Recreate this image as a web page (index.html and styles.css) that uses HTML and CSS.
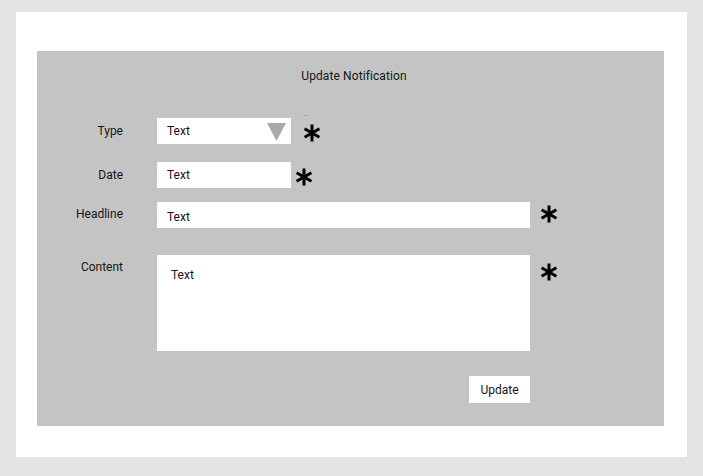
FILE: index.html
```html
<!DOCTYPE html>
<html lang="en">
<head>
<meta charset="utf-8">
<title>Update Notification</title>
<link rel="stylesheet" href="styles.css">
</head>
<body>
<div class="card">
  <section class="panel">
    <h1 class="title">Update Notification</h1>

    <div class="row row-type">
      <label class="label">Type</label>
      <div class="field">
        <div class="input input-short select">
          <span>Text</span>
          <svg class="caret" width="19" height="18" viewBox="0 0 19 18"><polygon points="0,0 19,0 9.5,18" fill="#a9a9a9"/></svg>
        </div>
        <span class="req req-type">
          <span class="note">...</span>
          <svg width="18" height="18" viewBox="0 0 18 18"><g stroke="#000" stroke-width="3"><line x1="9" y1="0.5" x2="9" y2="17.5"/><line x1="1.6" y1="4.75" x2="16.4" y2="13.25"/><line x1="16.4" y1="4.75" x2="1.6" y2="13.25"/></g></svg>
        </span>
      </div>
    </div>

    <div class="row row-date">
      <label class="label">Date</label>
      <div class="field">
        <div class="input input-short">Text</div>
        <span class="req req-date">
          <svg width="18" height="18" viewBox="0 0 18 18"><g stroke="#000" stroke-width="3"><line x1="9" y1="0.5" x2="9" y2="17.5"/><line x1="1.6" y1="4.75" x2="16.4" y2="13.25"/><line x1="16.4" y1="4.75" x2="1.6" y2="13.25"/></g></svg>
        </span>
      </div>
    </div>

    <div class="row row-headline">
      <label class="label">Headline</label>
      <div class="field">
        <div class="input input-long input-headline">Text</div>
        <span class="req req-headline">
          <svg width="18" height="18" viewBox="0 0 18 18"><g stroke="#000" stroke-width="3"><line x1="9" y1="0.5" x2="9" y2="17.5"/><line x1="1.6" y1="4.75" x2="16.4" y2="13.25"/><line x1="16.4" y1="4.75" x2="1.6" y2="13.25"/></g></svg>
        </span>
      </div>
    </div>

    <div class="row row-content">
      <label class="label">Content</label>
      <div class="field">
        <div class="input input-long textarea">Text</div>
        <span class="req req-content">
          <svg width="18" height="18" viewBox="0 0 18 18"><g stroke="#000" stroke-width="3"><line x1="9" y1="0.5" x2="9" y2="17.5"/><line x1="1.6" y1="4.75" x2="16.4" y2="13.25"/><line x1="16.4" y1="4.75" x2="1.6" y2="13.25"/></g></svg>
        </span>
      </div>
    </div>

    <div class="row row-actions">
      <span></span>
      <div class="actions">
        <button class="btn" type="button">Update</button>
      </div>
    </div>
  </section>
</div>
</body>
</html>
```

FILE: styles.css
```css
* {
  box-sizing: border-box;
}

html, body {
  margin: 0;
  padding: 0;
}

body {
  background: #e4e4e4;
  font-family: Roboto, "Liberation Sans", sans-serif;
  font-size: 12px;
  line-height: 14px;
  color: #151515;
}

.card {
  margin: 12px 16px 0 16px;
  background: #ffffff;
  padding: 39px 23px 31px 21px;
}

.panel {
  background: #c4c4c4;
  padding: 18px 0 23px 0;
}

.title {
  margin: 0;
  padding-left: 7px;
  font-size: 12px;
  line-height: 14px;
  font-weight: 400;
  text-align: center;
  letter-spacing: 0.1px;
}

.row {
  display: grid;
  grid-template-columns: 86px 1fr;
  column-gap: 34px;
  align-items: start;
}

.row-type { margin-top: 35px; }
.row-date { margin-top: 18px; }
.row-headline { margin-top: 14px; }
.row-content { margin-top: 27px; }
.row-actions { margin-top: 25px; }

.label {
  text-align: right;
  padding-top: 6px;
  line-height: 14px;
}

.row-headline .label { padding-top: 5px; }
.row-content .label { padding-top: 5px; }

.field {
  display: flex;
  align-items: flex-start;
}

.input {
  background: #ffffff;
  height: 26px;
  padding: 6px 10px 0 10px;
  line-height: 14px;
}

.input-short {
  width: 134px;
}

.input-long {
  width: 373px;
}

.input-headline {
  padding-top: 8px;
}

.select {
  display: flex;
  justify-content: space-between;
  align-items: flex-start;
  padding-right: 5px;
}

.caret {
  display: block;
  margin-top: -1px;
}

.textarea {
  height: 96px;
  padding: 13px 14px 0 14px;
}

.req {
  position: relative;
  display: block;
  width: 18px;
  height: 18px;
}

.req svg {
  display: block;
}

.req-type { margin: 6px 0 0 12px; }
.req-date { margin: 6px 0 0 4px; }
.req-headline { margin: 3px 0 0 10px; }
.req-content { margin: 8px 0 0 10px; }

.note {
  position: absolute;
  left: 0;
  top: -14px;
  font-size: 8px;
  line-height: 8px;
  color: #707070;
}

.actions {
  width: 373px;
  display: flex;
  justify-content: flex-end;
}

.btn {
  width: 61px;
  height: 27px;
  border: 0;
  margin: 0;
  padding: 1px 0 0 0;
  background: #ffffff;
  font-family: Roboto, "Liberation Sans", sans-serif;
  font-size: 12px;
  line-height: 14px;
  color: #151515;
}
```
